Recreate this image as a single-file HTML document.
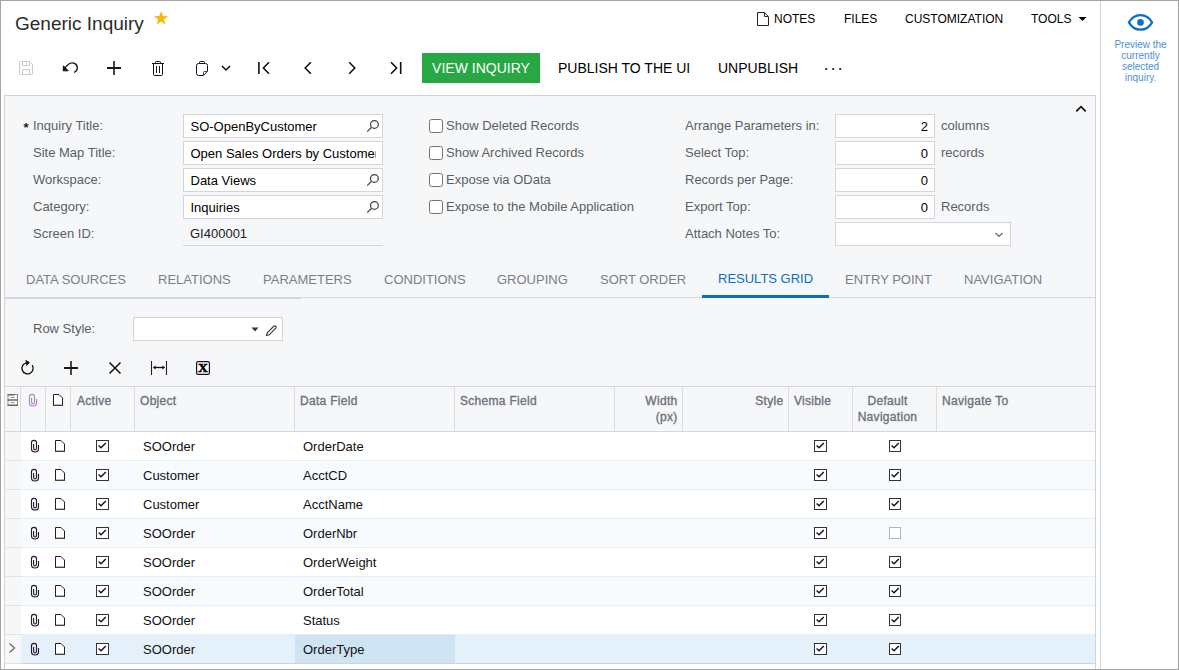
<!DOCTYPE html>
<html><head><meta charset="utf-8"><title>Generic Inquiry</title>
<style>
html,body{margin:0;padding:0;}
body{width:1179px;height:670px;overflow:hidden;background:#fff;font-family:"Liberation Sans",sans-serif;font-size:13px;color:#000;position:relative;}
.abs{position:absolute;}
#frame{position:absolute;left:0;top:0;width:1177px;height:668px;border:1px solid #a3a3a3;pointer-events:none;z-index:50;}
#title{left:15px;top:13px;font-size:19px;line-height:22px;color:#2b2b2b;white-space:nowrap;}
.toplink{top:12px;font-size:12px;line-height:14px;color:#000;white-space:nowrap;}
.tb{top:59px;font-size:14px;line-height:18px;color:#000;white-space:nowrap;}
#viewbtn{left:422px;top:53px;width:118px;height:30px;background:#27a844;color:#fff;font-size:14px;line-height:31px;text-align:center;}
#side{left:1100px;top:1px;width:1px;height:668px;background:#d0d3d9;}
#sidetext{left:1102px;top:39px;width:77px;text-align:center;font-size:10px;line-height:11px;color:#4a90d9;}
#panel{left:4px;top:95px;width:1090px;height:580px;border:1px solid #d0d3d9;background:#f5f7f9;}
.lbl{font-size:13px;line-height:16px;color:#5a5f66;white-space:nowrap;}
.inp{height:22px;border:1px solid #d2d5da;background:#fff;font-size:13px;line-height:23px;color:#000;white-space:nowrap;overflow:hidden;box-sizing:content-box;}
.cb{width:12px;height:12px;border:1px solid #747474;border-radius:2.500px;background:#fff;}
.tab{top:272px;font-size:13px;line-height:16px;color:#7a7f87;white-space:nowrap;}
.hc{position:absolute;top:387px;height:44px;border-left:1px solid #d9dce1;box-sizing:border-box;font-size:12px;letter-spacing:0.3px;-webkit-text-stroke:0.35px #6d7178;line-height:15.600px;color:#6d7178;}
.hc span{position:absolute;top:7px;white-space:nowrap;}
.row{position:absolute;left:5px;width:1090px;height:28px;border-bottom:1px solid #e5eff8;}
.row .ind{position:absolute;left:0;top:0;width:16px;height:28px;background:#f5f7f9;border-bottom:1px solid #dfe2e6;}
.row .t{position:absolute;top:7px;font-size:13px;line-height:16px;color:#111;white-space:nowrap;}
.gcb{position:absolute;top:8px;width:10.500px;height:10px;border:1px solid #333;background:#fff;}
.gcb svg{position:absolute;left:-1px;top:-1px;}
</style></head><body>
<div id="frame"></div>
<div id="title" class="abs">Generic Inquiry</div>
<svg class="abs" style="left:153.100px;top:9.500px" width="17" height="17" viewBox="0 0 16 16"><path d="M7.600 1.200 L9.300 5.600 L14.200 5.900 L10.400 8.900 L11.700 13.600 L7.600 10.900 L3.500 13.600 L4.800 8.900 L1 5.900 L5.900 5.600 Z" fill="#f8b70f"/></svg>
<svg class="abs" style="left:756px;top:11px" width="14" height="16" viewBox="0 0 14 16" fill="none" stroke="#222" stroke-width="1"><path d="M1.500 1.500 H8.300 L12.500 5.700 V14.500 H1.500 Z"/><path d="M8.500 1.800 V5.500 H12.200"/></svg>
<div class="abs toplink" style="left:774px">NOTES</div>
<div class="abs toplink" style="left:844px">FILES</div>
<div class="abs toplink" style="left:905px">CUSTOMIZATION</div>
<div class="abs toplink" style="left:1031px">TOOLS</div>
<svg class="abs" style="left:1078px;top:16px" width="9" height="6" viewBox="0 0 9 6"><path d="M0.500 1 H8.500 L4.500 5 Z" fill="#000"/></svg>
<svg class="abs" style="left:18px;top:60px" width="16" height="16" viewBox="0 0 16 16" fill="none" stroke="#cfc8cf" stroke-width="1"><path d="M2.500 1.500 H11.500 L14.500 4.500 V13.500 Q14.500 14.500 13.500 14.500 H2.500 Q1.500 14.500 1.500 13.500 V2.500 Q1.500 1.500 2.500 1.500 Z"/><path d="M4.500 1.500 V5.500 H11.500 V1.500"/><path d="M4.500 14.500 V9.500 H11.500 V14.500"/><path d="M8.500 2.500 V4.500"/></svg>
<svg class="abs" style="left:60px;top:60px" width="20" height="16" viewBox="0 0 20 16" fill="none" stroke="#111" stroke-width="1.300"><path d="M3.600 10.300 C6 5.500 10.500 1.400 14.600 3.400 C18.500 5.600 18.200 10.600 14.200 12.500"/><path d="M3.400 5.800 L3.200 10.800 L8.200 10.800 Z" stroke-linejoin="miter" fill="#111" stroke-width="1"/></svg>
<svg class="abs" style="left:106px;top:60px" width="16" height="16" viewBox="0 0 16 16" fill="none" stroke="#1a1a1a"><path d="M8 1 V15" stroke-width="1.600"/><path d="M1 8 H15" stroke-width="2"/></svg>
<svg class="abs" style="left:150px;top:60px" width="16" height="17" viewBox="0 0 16 17" fill="none" stroke="#1a0f22" stroke-width="1"><path d="M2 3.500 H14"/><path d="M5.500 3.500 V2.300 Q5.500 1.500 6.300 1.500 H9.700 Q10.500 1.500 10.500 2.300 V3.500"/><path d="M3.500 3.500 V14.500 Q3.500 15.500 4.500 15.500 H11.500 Q12.500 15.500 12.500 14.500 V3.500"/><path d="M6.500 6 V13 M9.500 6 V13"/></svg>
<svg class="abs" style="left:194px;top:60px" width="16" height="17" viewBox="0 0 16 17" fill="none" stroke="#1a0f22" stroke-width="1"><path d="M5.500 3.500 V2.300 Q5.500 1.500 6.300 1.500 H9.700 Q10.500 1.500 10.500 2.300 V3.500"/><path d="M4.500 3.500 H11.500 Q13.500 3.500 13.500 5.500 V11.200 L9.300 15.500 H4.500 Q2.500 15.500 2.500 13.500 V5.500 Q2.500 3.500 4.500 3.500 Z"/><path d="M9.500 15.200 V12.500 Q9.500 11.500 10.500 11.500 H13.300" stroke="#4a3a55"/></svg>
<svg class="abs" style="left:221px;top:64px" width="10" height="8" viewBox="0 0 10 8" fill="none" stroke="#111" stroke-width="1.500"><path d="M1 2 L5 6 L9 2"/></svg>
<svg class="abs" style="left:256px;top:60px" width="16" height="16" viewBox="0 0 16 16" fill="none" stroke="#111" stroke-width="1.600"><path d="M2.900 2 V14"/><path d="M13 2.200 L7.400 8 L13 13.800"/></svg>
<svg class="abs" style="left:300px;top:60px" width="16" height="16" viewBox="0 0 16 16" fill="none" stroke="#111" stroke-width="1.600"><path d="M10.800 2.200 L5.200 8 L10.800 13.800"/></svg>
<svg class="abs" style="left:344px;top:60px" width="16" height="16" viewBox="0 0 16 16" fill="none" stroke="#111" stroke-width="1.600"><path d="M5.200 2.200 L10.800 8 L5.200 13.800"/></svg>
<svg class="abs" style="left:388px;top:60px" width="16" height="16" viewBox="0 0 16 16" fill="none" stroke="#111" stroke-width="1.600"><path d="M12.700 2 V14"/><path d="M3 2.200 L8.600 8 L3 13.800"/></svg>
<div id="viewbtn" class="abs">VIEW INQUIRY</div>
<div class="abs tb" style="left:558px">PUBLISH TO THE UI</div>
<div class="abs tb" style="left:718px">UNPUBLISH</div>
<svg class="abs" style="left:824px;top:66.600px" width="18" height="4" viewBox="0 0 18 4"><circle cx="2.200" cy="2" r="1.100" fill="#111"/><circle cx="9.200" cy="2" r="1.100" fill="#111"/><circle cx="16.200" cy="2" r="1.100" fill="#111"/></svg>
<svg class="abs" style="left:1126px;top:12px" width="30" height="22" viewBox="0 0 30 22"><path d="M2.900 10.400 C6 4.800 10.500 3.100 14.500 3.100 C18.500 3.100 23 4.800 26.100 10.400 C23 16 18.500 17.700 14.500 17.700 C10.500 17.700 6 16 2.900 10.400 Z" fill="none" stroke="#0b6dc6" stroke-width="2.200"/><circle cx="14.500" cy="10.400" r="3.300" fill="#0b6dc6"/></svg>
<div id="sidetext" class="abs">Preview the<br>currently<br>selected<br>inquiry.</div>
<div id="panel" class="abs"></div>
<svg class="abs" style="left:1075px;top:103px" width="12" height="10" viewBox="0 0 12 10" fill="none" stroke="#111" stroke-width="1.700"><path d="M1.300 8.300 L6 3.600 L10.700 8.300"/></svg>
<div class="abs lbl" style="left:23.500px;top:120px;color:#222;font-weight:bold">*</div>
<div class="abs lbl" style="left:33px;top:118px">Inquiry Title:</div>
<div class="abs inp" style="left:183px;top:114px;width:198px"><div style="margin-left:6.500px;width:170px;overflow:hidden">SO-OpenByCustomer</div></div>
<svg class="abs" style="left:366px;top:119px" width="14" height="14" viewBox="0 0 14 14" fill="none" stroke="#444" stroke-width="1.250"><circle cx="8.400" cy="5.400" r="3.900"/><path d="M5.600 8.200 L1.200 12.600"/></svg>
<div class="abs lbl" style="left:33px;top:145px">Site Map Title:</div>
<div class="abs inp" style="left:183px;top:141px;width:198px"><div style="margin-left:6.500px;width:185px;overflow:hidden">Open Sales Orders by Customer</div></div>
<div class="abs lbl" style="left:33px;top:172px">Workspace:</div>
<div class="abs inp" style="left:183px;top:168px;width:198px"><div style="margin-left:6.500px;width:170px;overflow:hidden">Data Views</div></div>
<svg class="abs" style="left:366px;top:173px" width="14" height="14" viewBox="0 0 14 14" fill="none" stroke="#444" stroke-width="1.250"><circle cx="8.400" cy="5.400" r="3.900"/><path d="M5.600 8.200 L1.200 12.600"/></svg>
<div class="abs lbl" style="left:33px;top:199px">Category:</div>
<div class="abs inp" style="left:183px;top:195px;width:198px"><div style="margin-left:6.500px;width:170px;overflow:hidden">Inquiries</div></div>
<svg class="abs" style="left:366px;top:200px" width="14" height="14" viewBox="0 0 14 14" fill="none" stroke="#444" stroke-width="1.250"><circle cx="8.400" cy="5.400" r="3.900"/><path d="M5.600 8.200 L1.200 12.600"/></svg>
<div class="abs lbl" style="left:33px;top:226px">Screen ID:</div>
<div class="abs" style="left:183px;top:222px;width:200px;height:23px;border-bottom:1px solid #d2d5da;font-size:13px;line-height:24px;color:#1c1c1c"><span style="margin-left:7px">GI400001</span></div>
<div class="abs cb" style="left:429px;top:119px"></div><div class="abs lbl" style="left:446px;top:118px">Show Deleted Records</div>
<div class="abs cb" style="left:429px;top:146px"></div><div class="abs lbl" style="left:446px;top:145px">Show Archived Records</div>
<div class="abs cb" style="left:429px;top:173px"></div><div class="abs lbl" style="left:446px;top:172px">Expose via OData</div>
<div class="abs cb" style="left:429px;top:200px"></div><div class="abs lbl" style="left:446px;top:199px">Expose to the Mobile Application</div>
<div class="abs lbl" style="left:685px;top:118px">Arrange Parameters in:</div>
<div class="abs inp" style="left:835px;top:114px;width:98px;text-align:right"><span style="margin-right:6px">2</span></div>
<div class="abs lbl" style="left:941px;top:118px">columns</div>
<div class="abs lbl" style="left:685px;top:145px">Select Top:</div>
<div class="abs inp" style="left:835px;top:141px;width:98px;text-align:right"><span style="margin-right:6px">0</span></div>
<div class="abs lbl" style="left:941px;top:145px">records</div>
<div class="abs lbl" style="left:685px;top:172px">Records per Page:</div>
<div class="abs inp" style="left:835px;top:168px;width:98px;text-align:right"><span style="margin-right:6px">0</span></div>
<div class="abs lbl" style="left:685px;top:199px">Export Top:</div>
<div class="abs inp" style="left:835px;top:195px;width:98px;text-align:right"><span style="margin-right:6px">0</span></div>
<div class="abs lbl" style="left:941px;top:199px">Records</div>
<div class="abs lbl" style="left:685px;top:226px">Attach Notes To:</div>
<div class="abs inp" style="left:835px;top:222px;width:174px"></div>
<svg class="abs" style="left:994px;top:231px" width="10" height="8" viewBox="0 0 10 8" fill="none" stroke="#666" stroke-width="1.200"><path d="M1.500 2 L5 5.500 L8.500 2"/></svg>
<div class="abs" style="left:5px;top:297px;width:1090px;height:1px;background:#d6d9de"></div>
<div class="abs" style="left:5px;top:297px;width:296px;height:2px;background:#d3d6db"></div>
<div class="abs tab" style="left:26px">DATA SOURCES</div>
<div class="abs tab" style="left:158px">RELATIONS</div>
<div class="abs tab" style="left:263px">PARAMETERS</div>
<div class="abs tab" style="left:384px">CONDITIONS</div>
<div class="abs tab" style="left:497px">GROUPING</div>
<div class="abs tab" style="left:600px">SORT ORDER</div>
<div class="abs tab" style="left:718px;top:271px;color:#0b6dc6">RESULTS GRID</div>
<div class="abs" style="left:702px;top:295px;width:127px;height:3px;background:#0b6dc6"></div>
<div class="abs tab" style="left:845px">ENTRY POINT</div>
<div class="abs tab" style="left:964px">NAVIGATION</div>
<div class="abs lbl" style="left:33px;top:321px">Row Style:</div>
<div class="abs inp" style="left:133px;top:317px;width:148px"></div>
<svg class="abs" style="left:251px;top:326.500px" width="8" height="5" viewBox="0 0 8 5"><path d="M0.500 0.500 H7.500 L4 4.500 Z" fill="#333"/></svg>
<svg class="abs" style="left:263.500px;top:323.500px" width="14" height="14" viewBox="0 0 14 14" fill="none" stroke="#333" stroke-width="1.150"><path d="M2.500 11.500 L3.200 8.800 L9.800 2.200 Q10.800 1.400 11.800 2.300 Q12.600 3.200 11.800 4.200 L5.200 10.800 Z"/></svg>
<svg class="abs" style="left:19px;top:359px" width="17" height="17" viewBox="0 0 17 17" fill="none" stroke="#111" stroke-width="1.300"><path d="M13.200 6.200 A5.600 5.600 0 1 1 7.600 3.800"/><path d="M6.500 1.300 L10.300 3.500 L7.400 6.600" stroke-linejoin="miter" fill="#111" stroke-width="1"/></svg>
<svg class="abs" style="left:63px;top:360px" width="16" height="16" viewBox="0 0 16 16" fill="none" stroke="#1a1a1a"><path d="M8 1 V15" stroke-width="1.600"/><path d="M1 8 H15" stroke-width="2"/></svg>
<svg class="abs" style="left:108px;top:361px" width="14" height="14" viewBox="0 0 14 14" fill="none" stroke="#111" stroke-width="1.500"><path d="M1.500 1.500 L12.500 12.500 M12.500 1.500 L1.500 12.500"/></svg>
<svg class="abs" style="left:150px;top:360px" width="18" height="16" viewBox="0 0 18 16" fill="none" stroke="#111" stroke-width="1.300"><path d="M1.500 1 V15 M16.500 1 V15" stroke="#2a1a30" stroke-width="1.100"/><path d="M5 7.500 H13"/><path d="M2.800 7.500 L5.600 5.500 V9.500 Z M15.200 7.500 L12.400 5.500 V9.500 Z" fill="#111" stroke="none"/></svg>
<svg class="abs" style="left:196px;top:361px" width="14" height="14" viewBox="0 0 14 14"><rect x="0.600" y="0.600" width="12.800" height="12.800" rx="1.500" fill="#fff" stroke="#1a0f22" stroke-width="1.200"/><text transform="translate(7 11.200) scale(1.100 1)" x="0" y="0" text-anchor="middle" font-family="Liberation Serif, serif" font-weight="bold" font-size="12.500" fill="#000" stroke="#000" stroke-width="0.500">X</text></svg>
<div class="abs" style="left:5px;top:386px;width:1090px;height:1px;background:#d5d8dd"></div>
<div class="abs" style="left:5px;top:431px;width:1090px;height:1px;background:#d5d8dd"></div>
<div class="hc" style="left:20px;width:25px"></div>
<div class="hc" style="left:45px;width:25px"></div>
<div class="hc" style="left:70px;width:64px"><span style="left:6px">Active</span></div>
<div class="hc" style="left:134px;width:160px"><span style="left:5px">Object</span></div>
<div class="hc" style="left:294px;width:160px"><span style="left:5px">Data Field</span></div>
<div class="hc" style="left:454px;width:160px"><span style="left:5px">Schema Field</span></div>
<div class="hc" style="left:614px;width:68px"><span style="right:4.500px;text-align:right">Width<br>(px)</span></div>
<div class="hc" style="left:682px;width:106px"><span style="right:4.500px;text-align:right">Style</span></div>
<div class="hc" style="left:788px;width:64px"><span style="left:5px">Visible</span></div>
<div class="hc" style="left:852px;width:84px"><span style="left:4.500px;width:60px;text-align:center">Default<br>Navigation</span></div>
<div class="hc" style="left:936px;width:159px"><span style="left:5px">Navigate To</span></div>
<svg class="abs" style="left:7px;top:393px" width="12" height="14" viewBox="0 0 12 14"><rect x="1" y="1.500" width="9.500" height="11" fill="#fff" stroke="#8a8a8a" stroke-width="1"/><path d="M0.600 1.700 H7.500 M0.600 7 H10.900 M0.600 12.300 H10.900" stroke="#666" stroke-width="1.400"/><path d="M3.800 4.400 H7.800 M3.800 9.700 H7.800" stroke="#8a8a8a" stroke-width="1"/></svg>
<svg style="position:absolute;left:27px;top:393px;opacity:0.800" width="12" height="14" viewBox="0 0 12 14" fill="none" stroke="#a070b0" stroke-width="1.150"><path d="M9.500 6 V10 Q9.500 13 6 13 Q2.500 13 2.500 10 V3.500 Q2.500 1.400 5 1.400 Q7.500 1.400 7.500 3.500 V9 Q7.500 11 6 11 Q4.600 11 4.600 9 V5"/></svg>
<svg style="position:absolute;left:52px;top:393px" width="12" height="14" viewBox="0 0 12 14"><path d="M1.500 1.500 H7 L10.500 5 V12.500 H1.500 Z" fill="#fff" stroke="#2a1a30" stroke-width="1"/><path d="M2 11.500 H10" stroke="#bbb" stroke-width="1"/><path d="M1 12.500 H11" stroke="#444" stroke-width="1"/></svg>
<div class="row" style="top:432px;background:#fff"><div class="ind"></div><svg style="position:absolute;left:24px;top:7px;" width="12" height="14" viewBox="0 0 12 14" fill="none" stroke="#2a1a30" stroke-width="1.150"><path d="M9.500 6 V10 Q9.500 13 6 13 Q2.500 13 2.500 10 V3.500 Q2.500 1.400 5 1.400 Q7.500 1.400 7.500 3.500 V9 Q7.500 11 6 11 Q4.600 11 4.600 9 V5"/></svg><svg style="position:absolute;left:49px;top:7px" width="12" height="14" viewBox="0 0 12 14"><path d="M1.500 1.500 H7 L10.500 5 V12.500 H1.500 Z" fill="#fff" stroke="#2a1a30" stroke-width="1"/><path d="M2 11.500 H10" stroke="#bbb" stroke-width="1"/><path d="M1 12.500 H11" stroke="#444" stroke-width="1"/></svg><div class="gcb" style="left:91.250px"><svg width="13" height="12" viewBox="0 0 13 12" fill="none" stroke="#1a1020" stroke-width="1.400"><path d="M2.600 5.600 L5 7.800 L9.800 2.900"/></svg></div><div class="t" style="left:138px">SOOrder</div><div class="t" style="left:298px">OrderDate</div><div class="gcb" style="left:809.250px"><svg width="13" height="12" viewBox="0 0 13 12" fill="none" stroke="#1a1020" stroke-width="1.400"><path d="M2.600 5.600 L5 7.800 L9.800 2.900"/></svg></div><div class="gcb" style="left:883.500px"><svg width="13" height="12" viewBox="0 0 13 12" fill="none" stroke="#1a1020" stroke-width="1.400"><path d="M2.600 5.600 L5 7.800 L9.800 2.900"/></svg></div></div>
<div class="row" style="top:461px;background:#f7fbfe"><div class="ind"></div><svg style="position:absolute;left:24px;top:7px;" width="12" height="14" viewBox="0 0 12 14" fill="none" stroke="#2a1a30" stroke-width="1.150"><path d="M9.500 6 V10 Q9.500 13 6 13 Q2.500 13 2.500 10 V3.500 Q2.500 1.400 5 1.400 Q7.500 1.400 7.500 3.500 V9 Q7.500 11 6 11 Q4.600 11 4.600 9 V5"/></svg><svg style="position:absolute;left:49px;top:7px" width="12" height="14" viewBox="0 0 12 14"><path d="M1.500 1.500 H7 L10.500 5 V12.500 H1.500 Z" fill="#fff" stroke="#2a1a30" stroke-width="1"/><path d="M2 11.500 H10" stroke="#bbb" stroke-width="1"/><path d="M1 12.500 H11" stroke="#444" stroke-width="1"/></svg><div class="gcb" style="left:91.250px"><svg width="13" height="12" viewBox="0 0 13 12" fill="none" stroke="#1a1020" stroke-width="1.400"><path d="M2.600 5.600 L5 7.800 L9.800 2.900"/></svg></div><div class="t" style="left:138px">Customer</div><div class="t" style="left:298px">AcctCD</div><div class="gcb" style="left:809.250px"><svg width="13" height="12" viewBox="0 0 13 12" fill="none" stroke="#1a1020" stroke-width="1.400"><path d="M2.600 5.600 L5 7.800 L9.800 2.900"/></svg></div><div class="gcb" style="left:883.500px"><svg width="13" height="12" viewBox="0 0 13 12" fill="none" stroke="#1a1020" stroke-width="1.400"><path d="M2.600 5.600 L5 7.800 L9.800 2.900"/></svg></div></div>
<div class="row" style="top:490px;background:#fff"><div class="ind"></div><svg style="position:absolute;left:24px;top:7px;" width="12" height="14" viewBox="0 0 12 14" fill="none" stroke="#2a1a30" stroke-width="1.150"><path d="M9.500 6 V10 Q9.500 13 6 13 Q2.500 13 2.500 10 V3.500 Q2.500 1.400 5 1.400 Q7.500 1.400 7.500 3.500 V9 Q7.500 11 6 11 Q4.600 11 4.600 9 V5"/></svg><svg style="position:absolute;left:49px;top:7px" width="12" height="14" viewBox="0 0 12 14"><path d="M1.500 1.500 H7 L10.500 5 V12.500 H1.500 Z" fill="#fff" stroke="#2a1a30" stroke-width="1"/><path d="M2 11.500 H10" stroke="#bbb" stroke-width="1"/><path d="M1 12.500 H11" stroke="#444" stroke-width="1"/></svg><div class="gcb" style="left:91.250px"><svg width="13" height="12" viewBox="0 0 13 12" fill="none" stroke="#1a1020" stroke-width="1.400"><path d="M2.600 5.600 L5 7.800 L9.800 2.900"/></svg></div><div class="t" style="left:138px">Customer</div><div class="t" style="left:298px">AcctName</div><div class="gcb" style="left:809.250px"><svg width="13" height="12" viewBox="0 0 13 12" fill="none" stroke="#1a1020" stroke-width="1.400"><path d="M2.600 5.600 L5 7.800 L9.800 2.900"/></svg></div><div class="gcb" style="left:883.500px"><svg width="13" height="12" viewBox="0 0 13 12" fill="none" stroke="#1a1020" stroke-width="1.400"><path d="M2.600 5.600 L5 7.800 L9.800 2.900"/></svg></div></div>
<div class="row" style="top:519px;background:#f7fbfe"><div class="ind"></div><svg style="position:absolute;left:24px;top:7px;" width="12" height="14" viewBox="0 0 12 14" fill="none" stroke="#2a1a30" stroke-width="1.150"><path d="M9.500 6 V10 Q9.500 13 6 13 Q2.500 13 2.500 10 V3.500 Q2.500 1.400 5 1.400 Q7.500 1.400 7.500 3.500 V9 Q7.500 11 6 11 Q4.600 11 4.600 9 V5"/></svg><svg style="position:absolute;left:49px;top:7px" width="12" height="14" viewBox="0 0 12 14"><path d="M1.500 1.500 H7 L10.500 5 V12.500 H1.500 Z" fill="#fff" stroke="#2a1a30" stroke-width="1"/><path d="M2 11.500 H10" stroke="#bbb" stroke-width="1"/><path d="M1 12.500 H11" stroke="#444" stroke-width="1"/></svg><div class="gcb" style="left:91.250px"><svg width="13" height="12" viewBox="0 0 13 12" fill="none" stroke="#1a1020" stroke-width="1.400"><path d="M2.600 5.600 L5 7.800 L9.800 2.900"/></svg></div><div class="t" style="left:138px">SOOrder</div><div class="t" style="left:298px">OrderNbr</div><div class="gcb" style="left:809.250px"><svg width="13" height="12" viewBox="0 0 13 12" fill="none" stroke="#1a1020" stroke-width="1.400"><path d="M2.600 5.600 L5 7.800 L9.800 2.900"/></svg></div><div class="gcb" style="left:883.500px;border-color:#b5b5b5"></div></div>
<div class="row" style="top:548px;background:#fff"><div class="ind"></div><svg style="position:absolute;left:24px;top:7px;" width="12" height="14" viewBox="0 0 12 14" fill="none" stroke="#2a1a30" stroke-width="1.150"><path d="M9.500 6 V10 Q9.500 13 6 13 Q2.500 13 2.500 10 V3.500 Q2.500 1.400 5 1.400 Q7.500 1.400 7.500 3.500 V9 Q7.500 11 6 11 Q4.600 11 4.600 9 V5"/></svg><svg style="position:absolute;left:49px;top:7px" width="12" height="14" viewBox="0 0 12 14"><path d="M1.500 1.500 H7 L10.500 5 V12.500 H1.500 Z" fill="#fff" stroke="#2a1a30" stroke-width="1"/><path d="M2 11.500 H10" stroke="#bbb" stroke-width="1"/><path d="M1 12.500 H11" stroke="#444" stroke-width="1"/></svg><div class="gcb" style="left:91.250px"><svg width="13" height="12" viewBox="0 0 13 12" fill="none" stroke="#1a1020" stroke-width="1.400"><path d="M2.600 5.600 L5 7.800 L9.800 2.900"/></svg></div><div class="t" style="left:138px">SOOrder</div><div class="t" style="left:298px">OrderWeight</div><div class="gcb" style="left:809.250px"><svg width="13" height="12" viewBox="0 0 13 12" fill="none" stroke="#1a1020" stroke-width="1.400"><path d="M2.600 5.600 L5 7.800 L9.800 2.900"/></svg></div><div class="gcb" style="left:883.500px"><svg width="13" height="12" viewBox="0 0 13 12" fill="none" stroke="#1a1020" stroke-width="1.400"><path d="M2.600 5.600 L5 7.800 L9.800 2.900"/></svg></div></div>
<div class="row" style="top:577px;background:#f7fbfe"><div class="ind"></div><svg style="position:absolute;left:24px;top:7px;" width="12" height="14" viewBox="0 0 12 14" fill="none" stroke="#2a1a30" stroke-width="1.150"><path d="M9.500 6 V10 Q9.500 13 6 13 Q2.500 13 2.500 10 V3.500 Q2.500 1.400 5 1.400 Q7.500 1.400 7.500 3.500 V9 Q7.500 11 6 11 Q4.600 11 4.600 9 V5"/></svg><svg style="position:absolute;left:49px;top:7px" width="12" height="14" viewBox="0 0 12 14"><path d="M1.500 1.500 H7 L10.500 5 V12.500 H1.500 Z" fill="#fff" stroke="#2a1a30" stroke-width="1"/><path d="M2 11.500 H10" stroke="#bbb" stroke-width="1"/><path d="M1 12.500 H11" stroke="#444" stroke-width="1"/></svg><div class="gcb" style="left:91.250px"><svg width="13" height="12" viewBox="0 0 13 12" fill="none" stroke="#1a1020" stroke-width="1.400"><path d="M2.600 5.600 L5 7.800 L9.800 2.900"/></svg></div><div class="t" style="left:138px">SOOrder</div><div class="t" style="left:298px">OrderTotal</div><div class="gcb" style="left:809.250px"><svg width="13" height="12" viewBox="0 0 13 12" fill="none" stroke="#1a1020" stroke-width="1.400"><path d="M2.600 5.600 L5 7.800 L9.800 2.900"/></svg></div><div class="gcb" style="left:883.500px"><svg width="13" height="12" viewBox="0 0 13 12" fill="none" stroke="#1a1020" stroke-width="1.400"><path d="M2.600 5.600 L5 7.800 L9.800 2.900"/></svg></div></div>
<div class="row" style="top:606px;background:#fff"><div class="ind"></div><svg style="position:absolute;left:24px;top:7px;" width="12" height="14" viewBox="0 0 12 14" fill="none" stroke="#2a1a30" stroke-width="1.150"><path d="M9.500 6 V10 Q9.500 13 6 13 Q2.500 13 2.500 10 V3.500 Q2.500 1.400 5 1.400 Q7.500 1.400 7.500 3.500 V9 Q7.500 11 6 11 Q4.600 11 4.600 9 V5"/></svg><svg style="position:absolute;left:49px;top:7px" width="12" height="14" viewBox="0 0 12 14"><path d="M1.500 1.500 H7 L10.500 5 V12.500 H1.500 Z" fill="#fff" stroke="#2a1a30" stroke-width="1"/><path d="M2 11.500 H10" stroke="#bbb" stroke-width="1"/><path d="M1 12.500 H11" stroke="#444" stroke-width="1"/></svg><div class="gcb" style="left:91.250px"><svg width="13" height="12" viewBox="0 0 13 12" fill="none" stroke="#1a1020" stroke-width="1.400"><path d="M2.600 5.600 L5 7.800 L9.800 2.900"/></svg></div><div class="t" style="left:138px">SOOrder</div><div class="t" style="left:298px">Status</div><div class="gcb" style="left:809.250px"><svg width="13" height="12" viewBox="0 0 13 12" fill="none" stroke="#1a1020" stroke-width="1.400"><path d="M2.600 5.600 L5 7.800 L9.800 2.900"/></svg></div><div class="gcb" style="left:883.500px"><svg width="13" height="12" viewBox="0 0 13 12" fill="none" stroke="#1a1020" stroke-width="1.400"><path d="M2.600 5.600 L5 7.800 L9.800 2.900"/></svg></div></div>
<div class="row" style="top:635px;background:#e5f1fa;border-bottom-color:#cfd2d6"><div class="ind"></div><div style="position:absolute;left:290px;top:0;width:160px;height:28px;background:#cfe4f3"></div><svg style="position:absolute;left:3.400px;top:6.800px" width="8" height="12" viewBox="0 0 8 12" fill="none" stroke="#666" stroke-width="1.200"><path d="M1.500 1.500 L6.500 6 L1.500 10.500"/></svg><svg style="position:absolute;left:24px;top:7px;" width="12" height="14" viewBox="0 0 12 14" fill="none" stroke="#2a1a30" stroke-width="1.150"><path d="M9.500 6 V10 Q9.500 13 6 13 Q2.500 13 2.500 10 V3.500 Q2.500 1.400 5 1.400 Q7.500 1.400 7.500 3.500 V9 Q7.500 11 6 11 Q4.600 11 4.600 9 V5"/></svg><svg style="position:absolute;left:49px;top:7px" width="12" height="14" viewBox="0 0 12 14"><path d="M1.500 1.500 H7 L10.500 5 V12.500 H1.500 Z" fill="#fff" stroke="#2a1a30" stroke-width="1"/><path d="M2 11.500 H10" stroke="#bbb" stroke-width="1"/><path d="M1 12.500 H11" stroke="#444" stroke-width="1"/></svg><div class="gcb" style="left:91.250px"><svg width="13" height="12" viewBox="0 0 13 12" fill="none" stroke="#1a1020" stroke-width="1.400"><path d="M2.600 5.600 L5 7.800 L9.800 2.900"/></svg></div><div class="t" style="left:138px">SOOrder</div><div class="t" style="left:298px">OrderType</div><div class="gcb" style="left:809.250px"><svg width="13" height="12" viewBox="0 0 13 12" fill="none" stroke="#1a1020" stroke-width="1.400"><path d="M2.600 5.600 L5 7.800 L9.800 2.900"/></svg></div><div class="gcb" style="left:883.500px"><svg width="13" height="12" viewBox="0 0 13 12" fill="none" stroke="#1a1020" stroke-width="1.400"><path d="M2.600 5.600 L5 7.800 L9.800 2.900"/></svg></div></div>
<div class="abs" style="left:5px;top:664px;width:1090px;height:5px;background:#fff"></div>
<div id="side" class="abs"></div>
</body></html>
